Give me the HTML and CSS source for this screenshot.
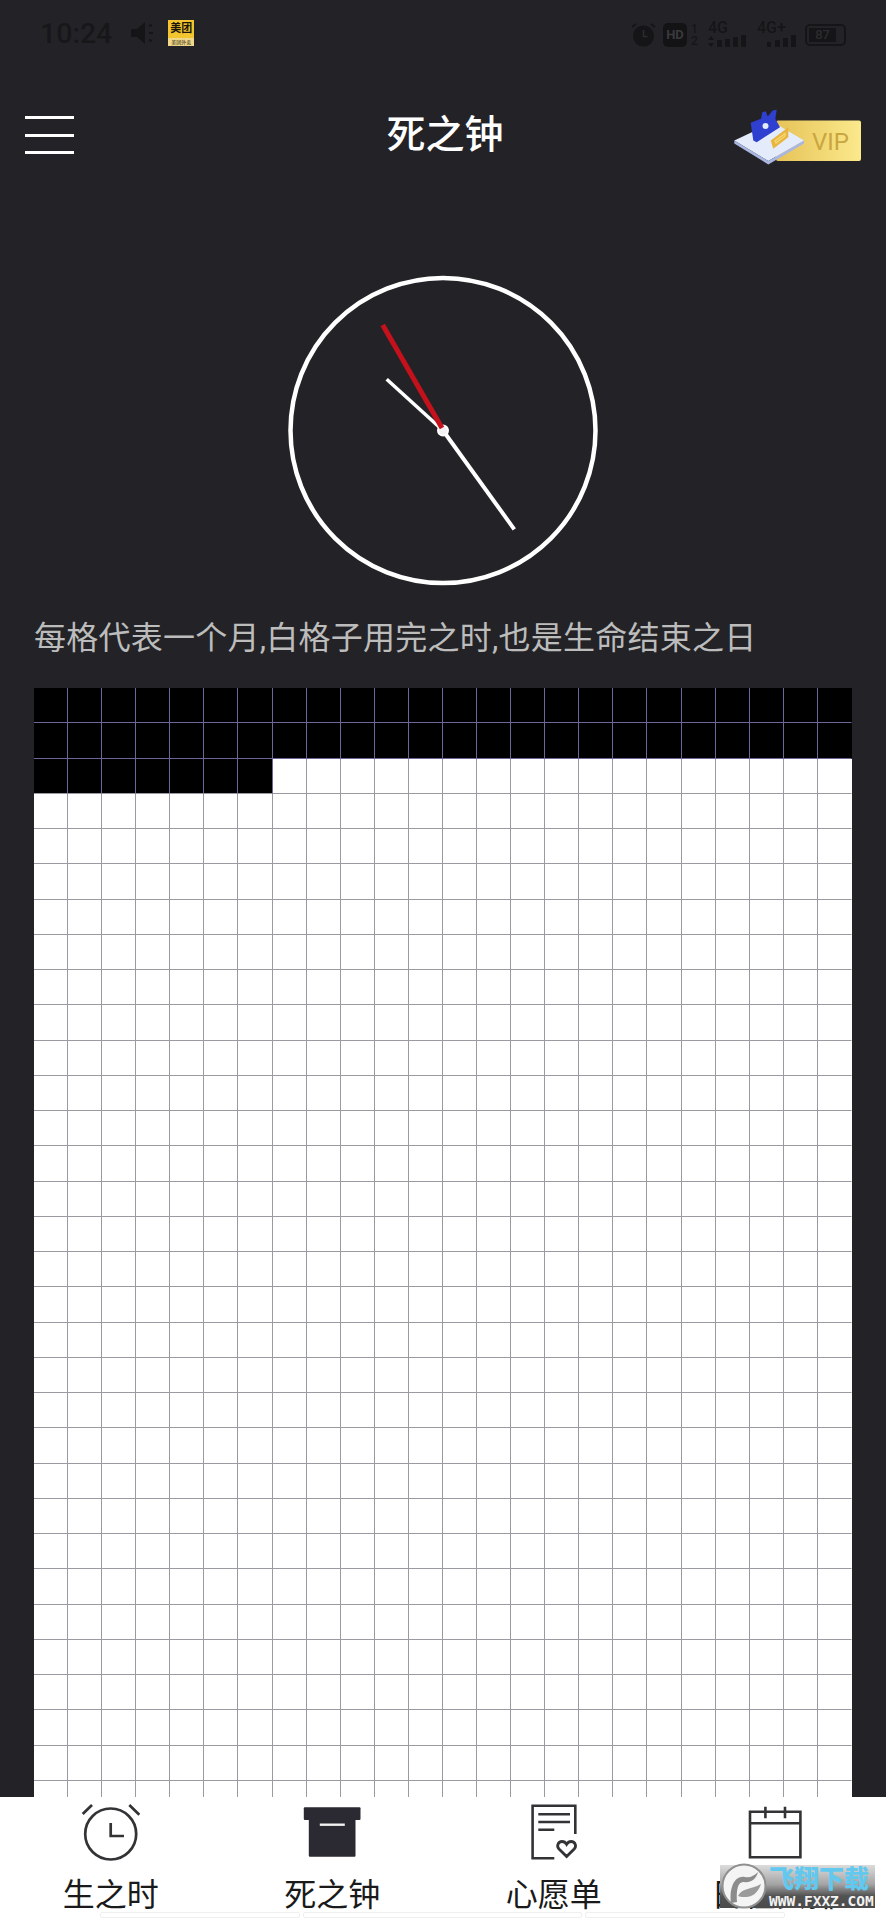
FILE: index.html
```html
<!DOCTYPE html>
<html lang="zh-CN">
<head>
<meta charset="utf-8">
<title>死之钟</title>
<link rel="stylesheet" href="styles.css">
</head>
<body>
<div class="app">
  <div class="statusbar">
    <div class="status-left">
      <span class="time">10:24</span>
      <svg class="st-speaker" width="26" height="26" viewBox="0 0 26 26"><path d="M1 9h6l8-7v22l-8-7H1z" fill="#151517"/><path d="M19 6l3-1M19 13h4M19 20l3 1" stroke="#151517" stroke-width="2" fill="none"/></svg>
      <span class="meituan"><span class="mt-name">美团</span><span class="mt-sub">美团外卖</span></span>
    </div>
    <div class="status-right">
      <svg width="25" height="26" viewBox="0 0 25 26"><circle cx="12.5" cy="14" r="10.5" fill="#151517"/><path d="M12.500 8v6.500h4" stroke="#2c2c30" stroke-width="1.600" fill="none"/><path d="M1 5l4-3M24 5l-4-3" stroke="#151517" stroke-width="2" fill="none"/></svg>
      <span class="st-hd">HD</span>
      <span class="st-sim"><span>1</span><span>2</span></span>
      <span class="st-net st-net-a">
        <span class="net-label">4G</span>
        <svg width="39" height="13" viewBox="0 0 39 13"><path d="M3 1l3 4H0zM3 12l3-4H0z" fill="#151517"/><rect x="9" y="5" width="5" height="7" fill="#151517"/><rect x="17" y="4" width="5" height="8" fill="#151517"/><rect x="25" y="2" width="5" height="10" fill="#151517"/><rect x="33" y="0" width="5" height="12" fill="#151517"/></svg>
      </span>
      <span class="st-net st-net-b">
        <span class="net-label">4G+</span>
        <svg width="39" height="13" viewBox="0 0 39 13"><rect x="10" y="7" width="4" height="5" fill="#151517"/><rect x="18" y="5" width="5" height="7" fill="#151517"/><rect x="26" y="3" width="5" height="9" fill="#151517"/><rect x="34" y="0" width="5" height="12" fill="#151517"/></svg>
      </span>
      <span class="st-battery"><span class="st-battery-fill">87</span></span>
    </div>
  </div>

  <header class="nav">
    <div class="nav-left">
      <button class="burger" aria-label="菜单"><span></span><span></span><span></span></button>
    </div>
    <h1 class="nav-title">死之钟</h1>
    <div class="nav-right">
      <svg class="vip" width="134" height="60" viewBox="0 0 134 60">
        <defs>
          <linearGradient id="vipg" x1="0" x2="1" y1="0" y2="0"><stop offset="0" stop-color="#e6c358"/><stop offset="1" stop-color="#fbe98c"/></linearGradient>
        </defs>
        <rect x="45" y="14.500" width="85" height="40.500" rx="2" fill="url(#vipg)"/>
        <text class="vip-text" x="81" y="43.500">VIP</text>
        <path d="M3.300 34.500 42.300 16.200 73 34.500 37.300 55z" fill="#e4ebfa"/>
        <path d="M3.300 34.500v3L37.300 58.500V55zM37.300 55v3.500L73 37.500v-3z" fill="#a9b6e2"/>
        <path d="M19.700 16.800 30 12.800 31.300 6.200 34.700 5.200 36.700 10.500 41.700 4.500 45.700 3.800 44.300 12.800 49 21.200 25.700 36.200 22.300 34.500z" fill="#2f3fd0"/>
        <circle cx="34.500" cy="20" r="3" fill="#e4ebfa"/>
        <path d="M39.700 34.500 57.300 21.200V31.200L42.300 42.800z" fill="#e8b63e"/>
        <path d="M44 35 54 27.500V30L45 37z" fill="none" stroke="#f6d878" stroke-width="1.200"/>
      </svg>
    </div>
  </header>

  <main class="content">
    <svg class="clock" width="316" height="316" viewBox="0 0 316 316">
      <circle cx="158" cy="158.500" r="152.500" fill="none" stroke="#fff" stroke-width="4.500"/>
      <line x1="158" y1="158.500" x2="101.700" y2="107.300" stroke="#fff" stroke-width="3.500"/>
      <line x1="158" y1="158.500" x2="229.300" y2="257.300" stroke="#fff" stroke-width="4"/>
      <circle cx="158" cy="158.500" r="5" fill="#f4f2f2" stroke="#fff" stroke-width="2"/>
      <line x1="157" y1="156" x2="97.700" y2="53" stroke="#c4111b" stroke-width="5"/>
    </svg>
    <p class="desc">每格代表一个月,白格子用完之时,也是生命结束之日</p>
    <div class="months" id="months"></div>
  </main>

  <nav class="tabs">
    <div class="tab">
      <svg class="tab-icon" width="64" height="64" viewBox="0 0 64 64" fill="none" stroke="#333336" stroke-width="2.700">
        <circle cx="31.700" cy="31" r="25.500"/>
        <path d="M3.700 11 13 2M50.300 2l10 9.700"/>
        <path d="M31.700 20v13H45"/>
      </svg>
      <span class="tab-label">生之时</span>
    </div>
    <div class="tab">
      <svg class="tab-icon" width="64" height="64" viewBox="0 0 64 64">
        <rect x="3.800" y="4.300" width="56.700" height="12.700" rx="1" fill="#2b2a33"/>
        <rect x="8.800" y="16" width="46.700" height="37.700" rx="1" fill="#2b2a33"/>
        <path d="M19.800 21.700h25" stroke="#f2f2f2" stroke-width="2.400"/>
      </svg>
      <span class="tab-label">死之钟</span>
    </div>
    <div class="tab">
      <svg class="tab-icon" width="64" height="64" viewBox="0 0 64 64" fill="none" stroke="#333336" stroke-width="2.600">
        <path d="M53.300 31V2.700H10.600v52.600h21.700"/>
        <path d="M16.300 11.300H48M16.300 19H48M16.300 26.700h16"/>
        <path d="M44.600 53.500 37 46c-2.700-2.800-1-7.500 3-7.500 2 0 3.500 1 4.600 2.800 1.100-1.800 2.600-2.800 4.600-2.800 4 0 5.700 4.700 3 7.500z" stroke-width="2.800"/>
      </svg>
      <span class="tab-label">心愿单</span>
    </div>
    <div class="tab">
      <svg class="tab-icon" width="64" height="64" viewBox="0 0 64 64" fill="none" stroke="#333336" stroke-width="2.600">
        <path d="M7 8.700h50.400v45.600H7zM7 20.300h50.400"/>
        <path d="M22.400 3.700v11.600M42 3.700v11.600"/>
      </svg>
      <span class="tab-label">日程安排</span>
    </div>
  </nav>

  <div class="home-strip"><span class="strip-a"></span><span class="strip-b"></span><span class="strip-c"></span></div>

  <div class="watermark">
    <svg class="wm-logo" width="46" height="46" viewBox="0 0 46 46">
      <circle cx="23" cy="23" r="21.500" fill="#f4f4f4" stroke="#8f8f8f" stroke-width="2"/>
      <path d="M10 40C8 24 14 12 24 14c5 1 9-1 13-5-2 8-8 11-14 10-6-1-8 8-7 20z" fill="#8c8c8c"/>
      <path d="M17 33c4-8 12-6 23-12-3 9-9 13-15 13-3 0-6 0-8-1z" fill="#9a9a9a"/>
    </svg>
    <div class="wm-text">
      <span class="wm-name">飞翔下载</span>
      <span class="wm-url">WWW.FXXZ.COM</span>
    </div>
  </div>
</div>
<script src="script.js"></script>
</body>
</html>
```

FILE: styles.css
```css
* { box-sizing: border-box; }

html, body { margin: 0; padding: 0; }

body {
  font-family: Roboto, "Noto Sans CJK SC", sans-serif;
  background: #232327;
}

.app {
  position: relative;
  display: flex;
  flex-direction: column;
  width: 886px;
  height: 1920px;
  overflow: hidden;
  background: #232327;
}

/* Status bar */
.statusbar {
  display: flex;
  flex: none;
  align-items: center;
  justify-content: space-between;
  height: 66px;
  padding: 0 40px 0 40px;
  color: #151517;
}

.status-left, .status-right { display: flex; align-items: center; }

.time { font-size: 28.5px; font-weight: 500; color: #17171a; }

.st-speaker { margin-left: 18px; }

.meituan {
  display: flex;
  flex-direction: column;
  align-items: center;
  width: 26px;
  height: 26px;
  margin-left: 12px;
  overflow: hidden;
  background: #f3c62f;
  color: #1c1608;
}

.mt-name { font-size: 11px; font-weight: 700; line-height: 18px; }
.mt-sub { width: 100%; background: #f0d98a; font-size: 5px; line-height: 8px; text-align: center; white-space: nowrap; }

.status-right { padding-top: 3px; }

.st-hd {
  display: flex;
  align-items: center;
  justify-content: center;
  width: 24px;
  height: 24px;
  margin-left: 7px;
  border-radius: 5px;
  background: #131315;
  color: #3a3a3e;
  font-size: 13px;
  font-weight: 700;
}

.st-sim {
  display: flex;
  flex-direction: column;
  width: 11px;
  margin-left: 2px;
  font-size: 12px;
  font-weight: 500;
  line-height: 12px;
  text-align: center;
}

.st-net { display: flex; flex-direction: column; width: 39px; margin-top: -1px; }
.st-net-a { margin-left: 8px; }
.st-net-b { margin-left: 10px; }
.net-label { font-size: 16px; font-weight: 500; line-height: 14px; }
.st-net svg { display: block; }

.st-battery {
  display: flex;
  align-items: stretch;
  width: 41px;
  height: 22px;
  margin-left: 9px;
  padding: 2px;
  border: 2px solid #151517;
  border-radius: 5px;
}

.st-battery-fill {
  width: 82%;
  background: #151517;
  color: #2c2c30;
  font-size: 13px;
  font-weight: 500;
  line-height: 14px;
  text-align: center;
}

/* Header */
.nav {
  display: grid;
  flex: none;
  grid-template-columns: 1fr auto 1fr;
  align-items: center;
  height: 138px;
  padding: 0 21px 0 25px;
}

.burger {
  display: flex;
  flex-direction: column;
  gap: 14.5px;
  width: 49px;
  padding: 0;
  border: 0;
  background: none;
}

.burger span { display: block; height: 3px; background: #fff; }

.nav-title {
  margin: 0;
  color: #fff;
  font-size: 39px;
  font-weight: 500;
  line-height: 50px;
}

.nav-right { display: flex; justify-content: flex-end; }
.vip { display: block; margin-top: 1px; }
.vip-text { fill: #c9a63f; font-family: Roboto, sans-serif; font-size: 24px; }

/* Main */
.content {
  display: flex;
  flex: 1;
  flex-direction: column;
  min-height: 0;
  padding: 68px 34px 0;
  overflow: hidden;
}

.clock { display: block; flex: none; margin: 0 auto; }

.desc {
  flex: none;
  margin: 27px 0;
  color: #bcbcbc;
  font-size: 32px;
  letter-spacing: 0.25px;
  line-height: 46px;
  white-space: nowrap;
}

.months {
  display: grid;
  flex: none;
  grid-template-columns: repeat(24, 1fr);
  grid-auto-rows: 35.25px;
  background: #fff;
}

.cell {
  border-right: 1px solid #9a9aa3;
  border-bottom: 1px solid #9a9aa3;
  background: #fff;
}

.cell:nth-child(24n) { border-right-color: transparent; }

.cell-used {
  border-right-color: #6c6699;
  border-bottom-color: #6c6699;
  background: #000;
}

.cell-used:nth-child(24n) { border-right-color: transparent; }
.cell-edge { border-bottom-color: #9a9aa3; }

/* Tabs */
.tabs {
  display: grid;
  flex: none;
  grid-template-columns: repeat(4, 1fr);
  height: 123px;
  padding-top: 6px;
  background: #fff;
}

.tab { display: flex; flex-direction: column; align-items: center; }
.tab-icon { display: block; flex: none; }

.tab-label {
  margin-top: 6px;
  color: #1a1a1a;
  font-size: 32px;
  line-height: 44px;
  white-space: nowrap;
}

.home-strip {
  position: absolute;
  left: 100px;
  bottom: 2px;
  display: flex;
  gap: 3px;
}

.home-strip span {
  display: block;
  height: 6px;
  border: 1px solid #efefef;
  border-radius: 2px;
}

.strip-a { width: 200px; }
.strip-b { width: 279px; }
.strip-c { width: 200px; }

/* Watermark overlay */
.watermark {
  position: absolute;
  left: 720px;
  top: 1865px;
  display: flex;
  align-items: flex-start;
  width: 155px;
  height: 43px;
  background: linear-gradient(180deg, #dcdcdc 0%, #a4a4a4 45%, #525252 72%, #4a4a4a 100%);
}

.wm-logo { display: block; flex: none; margin: -2px 0 0 1px; }

.wm-text {
  display: flex;
  flex-direction: column;
  align-items: flex-start;
  margin-left: 2px;
}

.wm-name {
  color: #62c8ee;
  font-size: 25px;
  font-weight: 900;
  line-height: 30px;
  white-space: nowrap;
}

.wm-url {
  color: #f2f2f2;
  font-family: "DejaVu Sans Mono", monospace;
  font-size: 14.5px;
  font-weight: 700;
  line-height: 13px;
  white-space: nowrap;
}
```

FILE: script.js
```js
var months = document.getElementById('months');
var USED = 55;
var TOTAL = 768;
var html = '';
for (var i = 0; i < TOTAL; i++) {
  var cls = 'cell';
  if (i < USED) {
    cls += ' cell-used';
    if (i >= 48) cls += ' cell-edge';
  }
  html += '<div class="' + cls + '"></div>';
}
months.innerHTML = html;
```
